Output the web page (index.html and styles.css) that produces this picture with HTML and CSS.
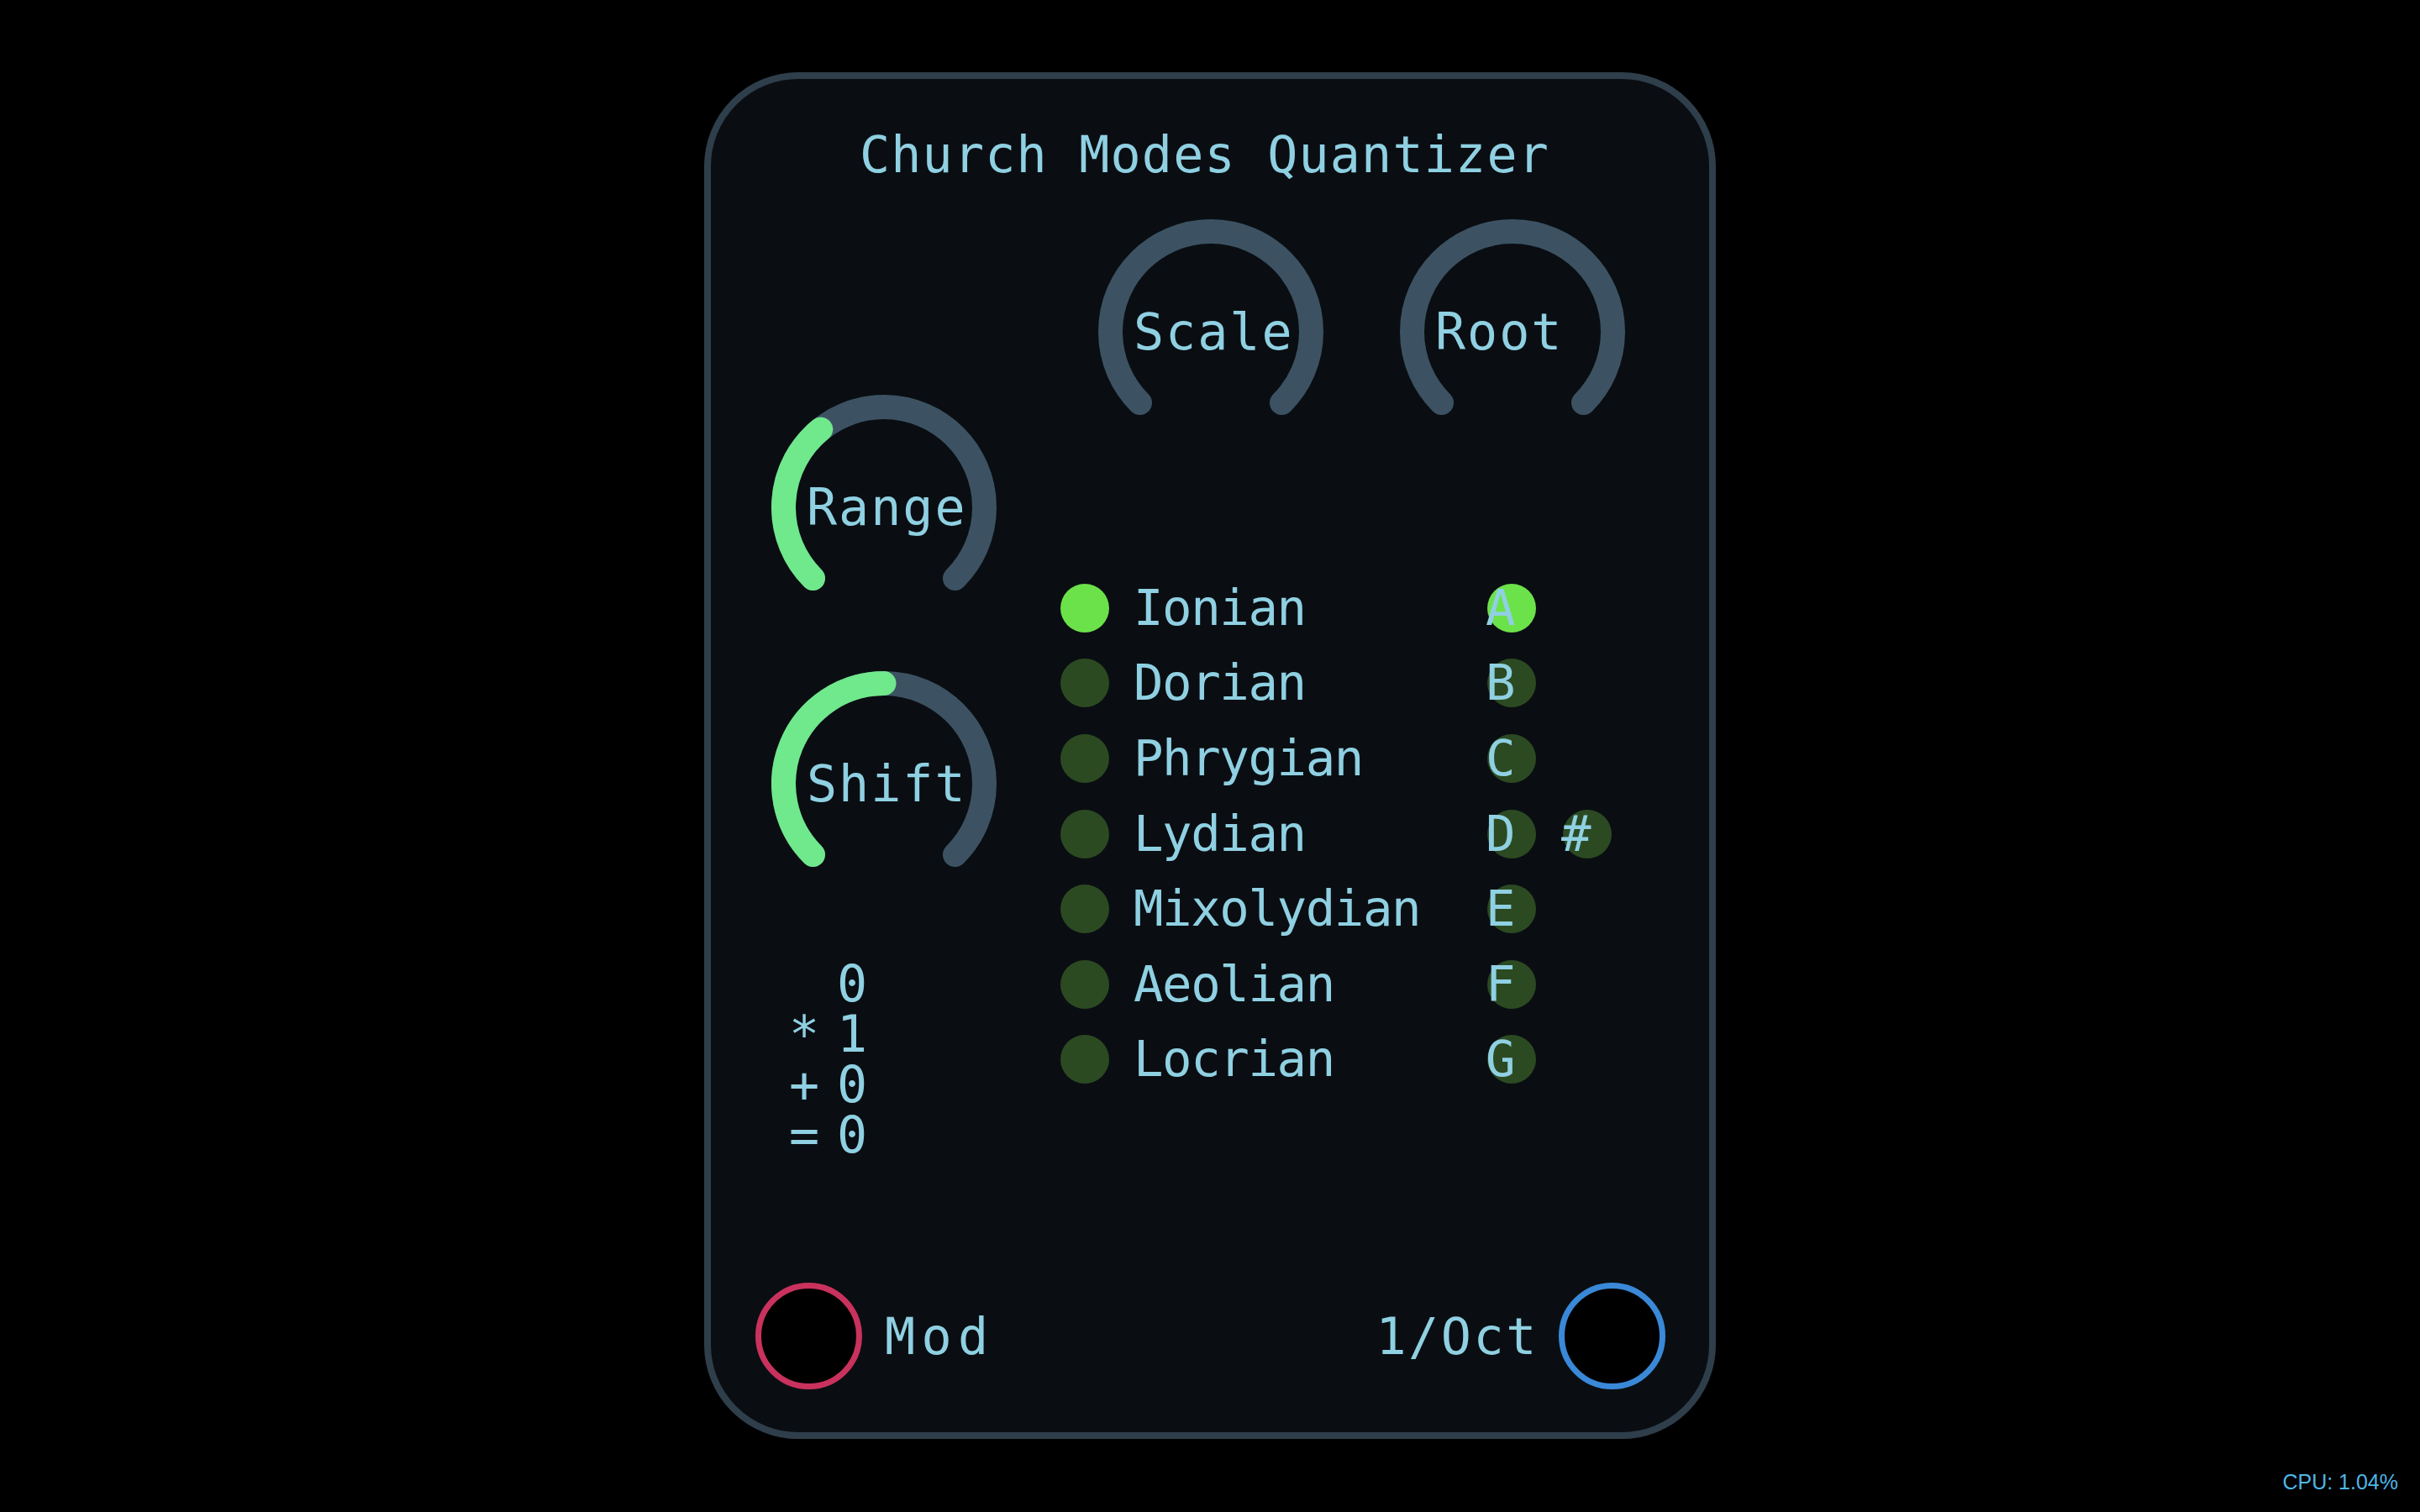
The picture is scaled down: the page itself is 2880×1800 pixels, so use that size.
FILE: index.html
```html
<!DOCTYPE html>
<html>
<head>
<meta charset="utf-8">
<title>Church Modes Quantizer</title>
<link rel="stylesheet" href="styles.css">
</head>
<body>
<div class="panel">
  <h1 class="title">Church Modes Quantizer</h1>
  <div class="body">
    <div class="left-col">
      <div class="knob">
        <svg viewBox="0 0 268 268" class="knob-svg">
          <path class="track" d="M 49.5 218.5 A 119.5 119.5 0 1 1 218.5 218.5"/>
          <path class="value" d="M 49.5 218.5 A 119.5 119.5 0 0 1 58.8 41.1"/>
        </svg>
        <span class="knob-label">Range</span>
      </div>
      <div class="knob knob-shift">
        <svg viewBox="0 0 268 268" class="knob-svg">
          <path class="track" d="M 49.5 218.5 A 119.5 119.5 0 1 1 218.5 218.5"/>
          <path class="value" d="M 49.5 218.5 A 119.5 119.5 0 0 1 134 14.5"/>
        </svg>
        <span class="knob-label">Shift</span>
      </div>
      <div class="calc">
        <span class="op"></span><span class="num">0</span>
        <span class="op">*</span><span class="num">1</span>
        <span class="op">+</span><span class="num">0</span>
        <span class="op">=</span><span class="num">0</span>
      </div>
    </div>
    <div class="right-col">
      <div class="top-knobs">
        <div class="knob">
          <svg viewBox="0 0 268 268" class="knob-svg">
            <path class="track" d="M 49.5 218.5 A 119.5 119.5 0 1 1 218.5 218.5"/>
          </svg>
          <span class="knob-label">Scale</span>
        </div>
        <div class="knob">
          <svg viewBox="0 0 268 268" class="knob-svg">
            <path class="track" d="M 49.5 218.5 A 119.5 119.5 0 1 1 218.5 218.5"/>
          </svg>
          <span class="knob-label">Root</span>
        </div>
      </div>
      <div class="modes">
        <div class="mode-row">
          <span class="dot on"></span><span class="mode-name">Ionian</span><span class="note on">A</span><span></span>
        </div>
        <div class="mode-row">
          <span class="dot"></span><span class="mode-name">Dorian</span><span class="note">B</span><span></span>
        </div>
        <div class="mode-row">
          <span class="dot"></span><span class="mode-name">Phrygian</span><span class="note">C</span><span></span>
        </div>
        <div class="mode-row">
          <span class="dot"></span><span class="mode-name">Lydian</span><span class="note">D</span><span class="note">#</span>
        </div>
        <div class="mode-row">
          <span class="dot"></span><span class="mode-name">Mixolydian</span><span class="note">E</span><span></span>
        </div>
        <div class="mode-row">
          <span class="dot"></span><span class="mode-name">Aeolian</span><span class="note">F</span><span></span>
        </div>
        <div class="mode-row">
          <span class="dot"></span><span class="mode-name">Locrian</span><span class="note">G</span><span></span>
        </div>
      </div>
    </div>
  </div>
  <div class="jacks">
    <div class="jack-group">
      <span class="jack jack-mod"></span>
      <span class="jack-label label-mod">Mod</span>
    </div>
    <div class="jack-group">
      <span class="jack-label label-oct">1/Oct</span>
      <span class="jack jack-oct"></span>
    </div>
  </div>
</div>
<div class="status">CPU: 1.04%</div>
</body>
</html>
```

FILE: styles.css
```css
html, body {
  margin: 0;
  padding: 0;
}

body {
  width: 2880px;
  height: 1800px;
  overflow: hidden;
  background: #000;
  font-family: "DejaVu Sans Mono", "Liberation Mono", monospace;
  color: #8fd0e2;
}

.panel {
  box-sizing: border-box;
  width: 1204px;
  height: 1627px;
  margin: 86px auto 0;
  border: 8px solid #2f3e4b;
  border-radius: 112px;
  background: #0a0e12;
  padding: 60px 52px 51px 53px;
  display: flex;
  flex-direction: column;
}

.title {
  margin: 0;
  padding-right: 14px;
  font-weight: normal;
  font-size: 60px;
  line-height: 60px;
  letter-spacing: 1.2px;
  text-align: center;
  white-space: nowrap;
}

.body {
  display: flex;
  margin-top: 47px;
  padding-left: 19px;
}

.left-col {
  width: 268px;
  padding-top: 209px;
  display: flex;
  flex-direction: column;
}

.knob {
  width: 268px;
  height: 268px;
  display: grid;
}

.knob > * {
  grid-area: 1 / 1;
}

.knob-svg {
  width: 268px;
  height: 268px;
  display: block;
}

.knob-svg path {
  fill: none;
  stroke-width: 29;
  stroke-linecap: round;
}

.knob-svg .track {
  stroke: #3c5262;
}

.knob-svg .value {
  stroke: #70e88c;
}

.knob-label {
  align-self: center;
  justify-self: start;
  margin-left: 42px;
  font-size: 60px;
  line-height: 60px;
  letter-spacing: 2px;
  white-space: nowrap;
}

.knob-shift {
  margin-top: 61px;
}

.calc {
  margin-top: 74px;
  margin-left: 14px;
  display: grid;
  grid-template-columns: 50px 50px;
  column-gap: 7px;
  font-size: 60px;
  line-height: 60px;
  text-align: center;
}

.right-col {
  margin-left: 76px;
}

.top-knobs {
  display: flex;
  gap: 91px;
  padding-left: 45px;
}

.modes {
  margin-top: 150px;
}

.mode-row {
  display: grid;
  grid-template-columns: 58px 450px 90px 58px;
  align-items: center;
  height: 89.6px;
}

.dot {
  width: 58px;
  height: 58px;
  border-radius: 50%;
  background: #2c4a22;
}

.dot.on {
  background: #6ce24a;
}

.mode-name {
  padding-left: 29px;
  font-size: 59px;
  line-height: 58px;
  letter-spacing: -1.4px;
  white-space: nowrap;
}

.note {
  width: 58px;
  height: 58px;
  border-radius: 50%;
  background: #2c4a22;
  font-size: 59px;
  line-height: 58px;
  text-indent: -2px;
  white-space: nowrap;
}

.note.on {
  background: #6ce24a;
}

.jacks {
  margin-top: auto;
  display: flex;
  justify-content: space-between;
  align-items: center;
}

.jack-group {
  display: flex;
  align-items: center;
}

.jack {
  box-sizing: border-box;
  width: 127px;
  height: 127px;
  border-radius: 50%;
  background: #000;
  border: 7.5px solid;
}

.jack-mod {
  border-color: #c9325d;
}

.jack-oct {
  border-color: #3a88d8;
}

.jack-label {
  font-size: 60px;
  line-height: 60px;
  white-space: nowrap;
}

.label-mod {
  margin-left: 27px;
  letter-spacing: 7.4px;
}

.label-oct {
  margin-right: 24px;
  letter-spacing: 2.6px;
}

.status {
  margin-top: 37px;
  padding-right: 26px;
  text-align: right;
  font-family: "Liberation Sans", Arial, sans-serif;
  font-size: 25px;
  line-height: 28px;
  color: #4fb6e6;
}
```
